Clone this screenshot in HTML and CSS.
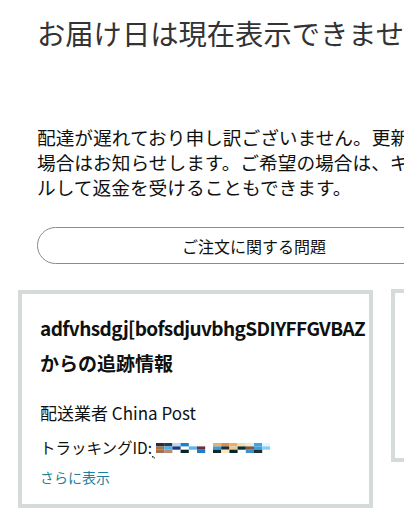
FILE: index.html
```html
<!DOCTYPE html>
<html lang="ja">
<head>
<meta charset="utf-8">
<title>お届け日</title>
<link rel="stylesheet" href="styles.css">
</head>
<body>
<div class="page">
  <div class="top">
    <h1 class="headline">お届け日は現在表示できません</h1>
    <p class="message">配達が遅れており申し訳ございません。更新があった<br>場合はお知らせします。ご希望の場合は、キャンセ<br>ルして返金を受けることもできます。</p>
    <button class="issue-btn" type="button">ご注文に関する問題</button>
  </div>
  <div class="cards">
    <div class="card card-main">
      <h2 class="card-title"><span class="title-latin">adfvhsdgj[bofsdjuvbhgSDIYFFGVBAZ</span>からの追跡情報</h2>
      <p class="carrier">配送業者 China Post</p>
      <p class="tracking">トラッキングID: <svg class="mosaic" width="118" height="16" viewBox="0 0 118 16">
        <rect x="0" y="13" width="1.5" height="1.5" fill="#203030"/>
        <rect x="1.5" y="14" width="1.5" height="1.5" fill="#5a8a40"/>
        <g transform="translate(4 0)">
          <rect x="0" y="0" width="8.2" height="3.4" fill="#1e3050"/>
          <rect x="8.2" y="0" width="8.2" height="3.4" fill="#2e3848"/>
          <rect x="16.4" y="0" width="8.2" height="3.4" fill="#bcd8f2"/>
          <rect x="24.6" y="0" width="8.2" height="3.4" fill="#1a82cc"/>
          <rect x="41" y="0" width="8.2" height="3.4" fill="#fffaf0"/>
          <rect x="0" y="3.4" width="8.2" height="3.3" fill="#a87248"/>
          <rect x="8.2" y="3.4" width="8.2" height="3.3" fill="#4ab4f0"/>
          <rect x="16.4" y="3.4" width="8.2" height="3.3" fill="#1c3a84"/>
          <rect x="32.8" y="3.4" width="8.2" height="3.3" fill="#5cb4ec"/>
          <rect x="41" y="3.4" width="8.2" height="3.3" fill="#68303c"/>
          <rect x="0" y="6.7" width="8.2" height="3.3" fill="#a86e4c"/>
          <rect x="8.2" y="6.7" width="8.2" height="3.3" fill="#b48c78"/>
          <rect x="24.6" y="6.7" width="8.2" height="3.3" fill="#0e2424"/>
          <rect x="41" y="6.7" width="8.2" height="3.3" fill="#1f7fc4"/>
        </g>
        <g transform="translate(61 0)">
          <rect x="0" y="0" width="8.2" height="3.4" fill="#e8b070"/>
          <rect x="8.2" y="0" width="8.2" height="3.4" fill="#dc8e50"/>
          <rect x="16.4" y="0" width="8.2" height="3.4" fill="#e4b068"/>
          <rect x="24.6" y="0" width="8.2" height="3.4" fill="#f8dca8"/>
          <rect x="32.8" y="0" width="8.2" height="3.4" fill="#f0e8d8"/>
          <rect x="41" y="0" width="8.2" height="3.4" fill="#40a4e4"/>
          <rect x="49.2" y="0" width="8.2" height="3.4" fill="#e4f6ff"/>
          <rect x="0" y="3.4" width="8.2" height="3.3" fill="#38a0d8"/>
          <rect x="8.2" y="3.4" width="8.2" height="3.3" fill="#222a2e"/>
          <rect x="16.4" y="3.4" width="8.2" height="3.3" fill="#e8c890"/>
          <rect x="24.6" y="3.4" width="8.2" height="3.3" fill="#083030"/>
          <rect x="32.8" y="3.4" width="8.2" height="3.3" fill="#8a5040"/>
          <rect x="41" y="3.4" width="8.2" height="3.3" fill="#3aa0e0"/>
          <rect x="49.2" y="3.4" width="8.2" height="3.3" fill="#80d0f8"/>
          <rect x="0" y="6.7" width="8.2" height="3.3" fill="#102828"/>
          <rect x="8.2" y="6.7" width="8.2" height="3.3" fill="#f8e8c8"/>
          <rect x="16.4" y="6.7" width="8.2" height="3.3" fill="#082828"/>
          <rect x="32.8" y="6.7" width="8.2" height="3.3" fill="#4090c8"/>
          <rect x="41" y="6.7" width="8.2" height="3.3" fill="#203030"/>
        </g>
      </svg></p>
      <a class="more" href="#">さらに表示</a>
    </div>
    <div class="card card-side"></div>
  </div>
</div>
</body>
</html>
```

FILE: styles.css
```css
html, body {
  margin: 0;
  padding: 0;
  background: #ffffff;
  overflow: hidden;
}

body {
  font-family: "Noto Sans CJK JP", "Noto Sans", sans-serif;
  color: #0f1111;
}

.page {
  width: 720px;
}

.top {
  width: 480px;
  padding: 13px 0 0 37px;
}

.headline {
  margin: 0;
  font-size: 28.3px;
  font-weight: 400;
  line-height: 40px;
  color: #333333;
  white-space: nowrap;
}

.message {
  margin: 71px 0 0 0;
  font-size: 18.7px;
  line-height: 25px;
  color: #0f1111;
  white-space: nowrap;
}

.issue-btn {
  display: block;
  margin-top: 28px;
  width: 434px;
  height: 37px;
  border: 1px solid #888c8c;
  border-radius: 19px;
  background: #ffffff;
  font-family: "Noto Sans CJK JP", "Noto Sans", sans-serif;
  font-size: 16px;
  color: #0f1111;
  padding: 0;
}

.cards {
  display: flex;
  align-items: flex-start;
  gap: 18px;
  margin-top: 26px;
  padding-left: 18px;
}

.card {
  border: 4px solid #d5dbdb;
  background: #ffffff;
  box-sizing: border-box;
}

.card-main {
  width: 355px;
  height: 218px;
  padding: 16px 18px 0 18px;
}

.card-side {
  width: 300px;
  height: 173px;
  margin-top: -1px;
}

.card-title {
  margin: 0;
  font-size: 19px;
  font-weight: 700;
  line-height: 35px;
  color: #0f1111;
}

.title-latin {
  letter-spacing: -0.6px;
}

.carrier {
  margin: 20px 0 0 0;
  font-size: 17px;
  line-height: 25px;
}

.tracking {
  margin: 11px 0 0 0;
  font-size: 15.5px;
  line-height: 22px;
  white-space: nowrap;
}

.mosaic {
  vertical-align: -5px;
  margin-left: -4px;
}

.more {
  display: block;
  margin-top: 8px;
  font-size: 14px;
  line-height: 20px;
  color: #1f7f98;
  text-decoration: none;
}
```
